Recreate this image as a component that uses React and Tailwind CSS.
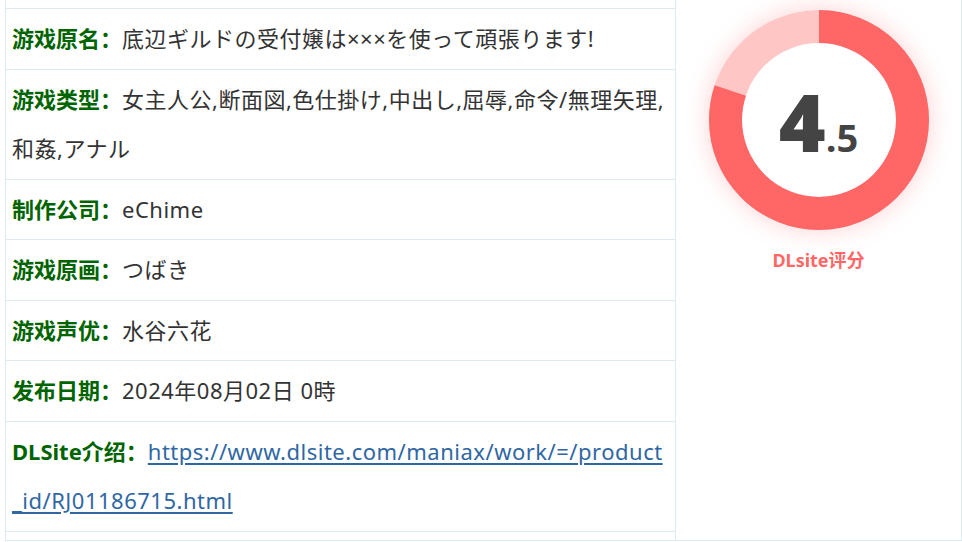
import React from 'react';

const rows = [
  { label: '游戏原名', value: '底辺ギルドの受付嬢は×××を使って頑張ります!' },
  { label: '游戏类型', value: '女主人公,断面図,色仕掛け,中出し,屈辱,命令/無理矢理,和姦,アナル' },
  { label: '制作公司', value: 'eChime' },
  { label: '游戏原画', value: 'つばき' },
  { label: '游戏声优', value: '水谷六花' },
  { label: '发布日期', value: '2024年08月02日 0時' },
];

const Score = () => {
  const r = 93.5;
  const c = 2 * Math.PI * r;
  return (
    <div className="flex flex-col items-center pt-[10px]">
      <div className="relative w-[220px] h-[220px] rounded-full shadow-[0_0_24px_rgba(255,102,102,0.3)]">
        <svg width="220" height="220" viewBox="0 0 220 220" className="block -rotate-90">
          <circle cx="110" cy="110" r={r} fill="none" stroke="#ffc6c6" strokeWidth="33" />
          <circle
            cx="110"
            cy="110"
            r={r}
            fill="none"
            stroke="#ff6666"
            strokeWidth="33"
            strokeDasharray={`${c * 0.8} ${c}`}
          />
        </svg>
        <div className="absolute inset-0 flex items-center justify-center">
          <div className="flex items-baseline font-extrabold text-[#444] font-['Open_Sans',sans-serif] mt-[2px]">
            <span className="text-[80px] leading-none">4</span>
            <span className="text-[38px] leading-none font-bold">.5</span>
          </div>
        </div>
      </div>
      <p className="mt-[18px] text-[18px] leading-[24px] font-bold text-[#ff6666]">DLsite评分</p>
    </div>
  );
};

export default function App() {
  return (
    <div className="bg-white w-[962px] h-[542px] overflow-hidden font-['Noto_Sans','Noto_Sans_CJK_SC',sans-serif] text-[#333]">
      <div className="ml-[5px] w-[957px] h-[541px] border-x border-b border-[#dde9f3] flex">
        <div className="w-[670px] border-r border-[#dde9f3] pt-[8px]">
          {rows.map((row) => (
            <div key={row.label} className="border-t border-[#dde9f3] px-[6px] py-[5px] text-[22px] leading-[49.5px] break-all">
              <span className="font-bold text-[#006400]">{row.label}：</span>
              <span className="tracking-[0.5px]">{row.value}</span>
            </div>
          ))}
          <div className="border-y border-[#dde9f3] px-[6px] py-[5px] text-[22px] leading-[49.5px] break-all">
            <span className="font-bold text-[#006400]">DLSite介绍：</span>
            <a href="#" className="text-[#2f67a3] underline underline-offset-[3px] tracking-[0.5px]">
              https://www.dlsite.com/maniax/work/=/product_id/RJ01186715.html
            </a>
          </div>
        </div>
        <div className="flex-1">
          <Score />
        </div>
      </div>
    </div>
  );
}
